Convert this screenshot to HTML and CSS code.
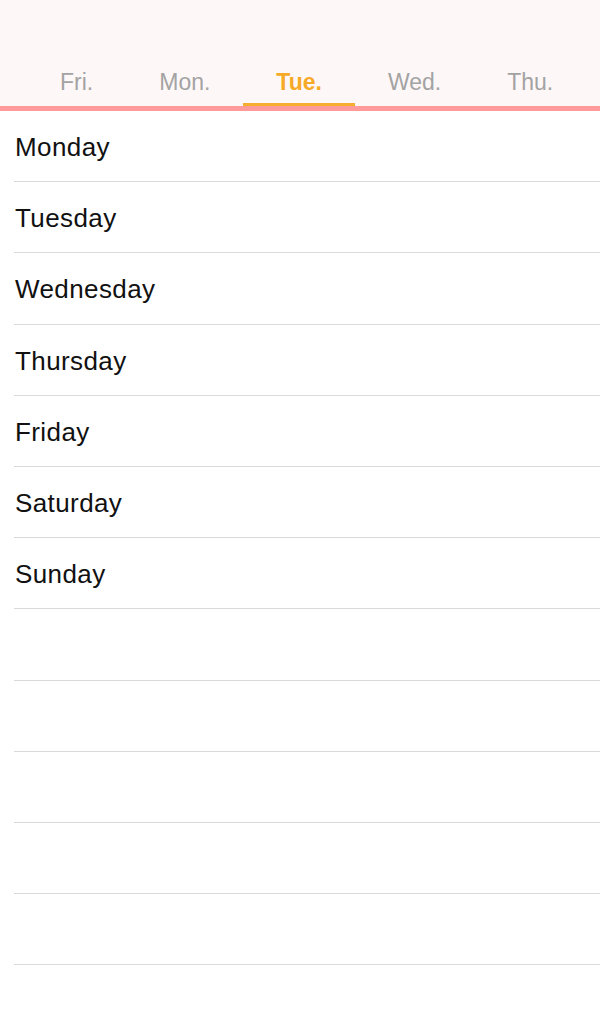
FILE: index.html
```html
<!DOCTYPE html>
<html lang="en">
<head>
    <meta charset="UTF-8">
    <meta name="viewport" content="width=device-width, initial-scale=1.0">
    <title>Week</title>
    <link rel="stylesheet" href="styles.css">
</head>
<body>

<div class="header">
    <div class="tabs">
        <div class="tab">Fri.</div>
        <div class="tab">Mon.</div>
        <div class="tab active">Tue.</div>
        <div class="tab">Wed.</div>
        <div class="tab">Thu.</div>
    </div>
</div>

<ul class="day-list">
    <li>Monday</li>
    <li>Tuesday</li>
    <li>Wednesday</li>
    <li>Thursday</li>
    <li>Friday</li>
    <li>Saturday</li>
    <li>Sunday</li>
    <li></li>
    <li></li>
    <li></li>
    <li></li>
    <li></li>
</ul>

</body>
</html>
```

FILE: styles.css
```css
body {
    margin: 0;
    padding: 0;
    background: #fff;
    font-family: "Liberation Sans", Arial, sans-serif;
}

.header {
    background-color: #fdf8f7;
    padding-top: 69px;
    border-bottom: 5px solid #ff9a9a;
}

.tabs {
    display: flex;
    padding-left: 27px;
}

.tab {
    padding: 0 33px 8px;
    font-size: 23px;
    line-height: 26px;
    color: #a3a3a3;
    border-bottom: 3px solid transparent;
}

.tab.active {
    color: #f7a928;
    font-weight: bold;
    border-bottom-color: #f7ae2e;
}

.day-list {
    list-style: none;
    margin: 0;
    padding: 0 0 0 14px;
}

.day-list li {
    height: 70.2px;
    line-height: 72px;
    padding-left: 1px;
    font-size: 26px;
    letter-spacing: 0.4px;
    color: #111;
    border-bottom: 1px solid #d9d9d9;
}
```
